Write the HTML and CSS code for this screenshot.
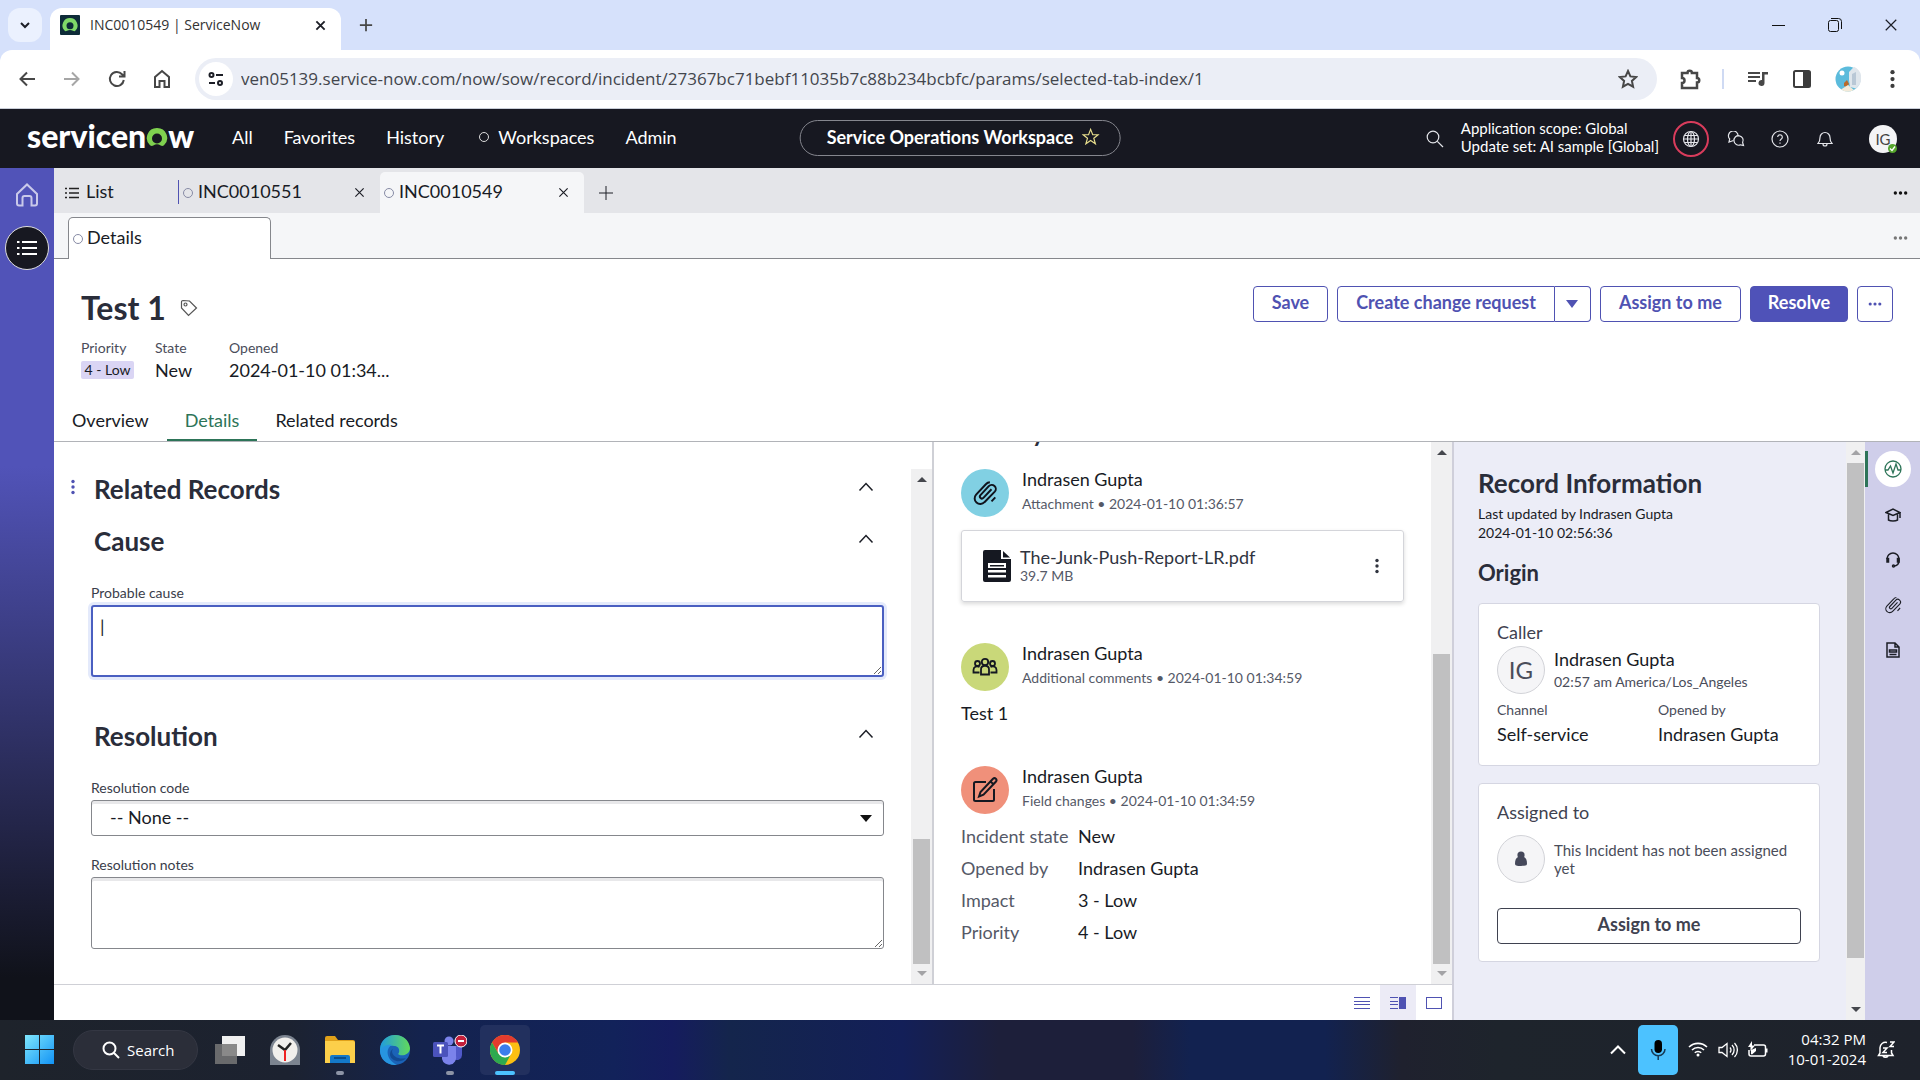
FILE: index.html
```html
<!DOCTYPE html>
<html lang="en">
<head>
<meta charset="utf-8">
<title>INC0010549 | ServiceNow</title>
<link rel="stylesheet" href="styles.css">
</head>
<body>
<svg class="defs" aria-hidden="true">
  <symbol id="clip" viewBox="0 0 24 24"><path d="M18 8.500 10.500 16.500a1.800 1.800 0 0 1-2.700-2.500l7.700-8.300a3.700 3.700 0 0 1 5.500 5L11.500 20.500a5.200 5.200 0 0 1-7.700-7L13 3.700a5 5 0 0 1 3.500-1.700M21.500 16l-3.500 3.700"/></symbol>
  <symbol id="chev" viewBox="0 0 16 16"><path d="m1.500 11.500 6.500-7 6.500 7"/></symbol>
  <symbol id="cross" viewBox="0 0 12 12"><path d="m1.500 1.500 9 9m0-9-9 9"/></symbol>
  <symbol id="plus" viewBox="0 0 16 16"><path d="M8 1v14M1 8h14"/></symbol>
  <symbol id="dots" viewBox="0 0 16 4"><circle cx="2.500" cy="2" r="1.800"/><circle cx="8" cy="2" r="1.800"/><circle cx="13.500" cy="2" r="1.800"/></symbol>
  <symbol id="kebab" viewBox="0 0 4 16"><circle cx="2" cy="2.500" r="1.700"/><circle cx="2" cy="8" r="1.700"/><circle cx="2" cy="13.500" r="1.700"/></symbol>
</svg>

<header class="browser">
  <div class="strip">
    <button class="strip-menu" aria-label="Search tabs"><svg width="12" height="12" viewBox="0 0 12 12"><path d="m2 4 4 4 4-4"/></svg></button>
    <div class="browser-tab">
      <svg class="favicon" width="20" height="20" viewBox="0 0 20 20"><rect width="20" height="20" rx="1" fill="#0d2b38"/><path d="M10 3a7.500 7.500 0 0 0-5.500 12.600c.7.800 1.600.7 2.500.1 1.800-1.100 4.200-1.100 6 0 .9.600 1.800.7 2.500-.1A7.500 7.500 0 0 0 10 3Z" fill="#7fd968"/><circle cx="10" cy="10.800" r="3.500" fill="#0d2b38"/></svg>
      <span class="browser-tab-title">INC0010549 | ServiceNow</span>
      <button class="icon-btn" aria-label="Close tab"><svg class="ln w2" width="11" height="11"><use href="#cross"/></svg></button>
    </div>
    <button class="icon-btn new-tab" aria-label="New tab"><svg class="ln w2 grey" width="14" height="14"><use href="#plus"/></svg></button>
    <div class="win-controls">
      <button class="icon-btn" aria-label="Minimize"><svg width="14" height="14"><path d="M0 7.500h13" stroke="#111"/></svg></button>
      <button class="icon-btn" aria-label="Restore"><svg width="14" height="14" fill="none" stroke="#111"><rect x=".5" y="2.500" width="10" height="11" rx="2"/><path d="M3 .5h7.500a3 3 0 0 1 3 3V11"/></svg></button>
      <button class="icon-btn" aria-label="Close"><svg class="ln" width="14" height="14"><use href="#cross"/></svg></button>
    </div>
  </div>
  <div class="toolbar">
    <div class="nav-btns">
      <button class="icon-btn" aria-label="Back"><svg class="ln w2 grey" width="16" height="16" viewBox="0 0 16 16"><path d="M16 8H2M8 1.500 1.500 8 8 14.500"/></svg></button>
      <button class="icon-btn" aria-label="Forward"><svg class="ln w2 pale" width="16" height="16" viewBox="0 0 16 16"><path d="M0 8h14M8 1.500 14.500 8 8 14.500"/></svg></button>
      <button class="icon-btn" aria-label="Reload"><svg class="ln w2 grey" width="18" height="18" viewBox="0 0 18 18"><path d="M15.800 10A7 7 0 1 1 14 4.200L16 6M16.500 1v5.500H11"/></svg></button>
      <button class="icon-btn" aria-label="Home"><svg class="ln w2 grey" width="18" height="20" viewBox="0 0 18 20"><path d="M2 8 9 2l7 6v10h-4.500v-6h-5v6H2Z"/></svg></button>
    </div>
    <div class="urlbar">
      <button class="site-info" aria-label="Site information"><svg class="ln w2" width="16" height="14" viewBox="0 0 16 14"><circle cx="3.500" cy="3" r="2"/><path d="M8 3h7M1 11h6"/><circle cx="12" cy="11" r="2"/></svg></button>
      <input class="url" aria-label="Address" value="ven05139.service-now.com/now/sow/record/incident/27367bc71bebf11035b7c88b234bcbfc/params/selected-tab-index/1">
      <button class="icon-btn" aria-label="Bookmark"><svg class="ln w2 grey" width="20" height="20" viewBox="0 0 20 20"><path d="m10 2 2.400 5.400 5.800.6-4.300 3.900 1.200 5.800L10 14.800l-5.100 2.900 1.200-5.800L1.800 8l5.800-.6Z"/></svg></button>
    </div>
    <div class="ext-btns">
      <button class="icon-btn" aria-label="Extensions"><svg class="ln w25 grey" width="22" height="22" viewBox="0 0 22 22"><path d="M2 5h5.500a2.200 2.200 0 0 1 4.400 0H17v5a2.200 2.200 0 0 1 0 4.500V20H2v-5a2.500 2.500 0 0 0 0-5Z"/></svg></button>
      <span class="vbar"></span>
      <button class="icon-btn" aria-label="Media"><svg width="20" height="16" viewBox="0 0 20 16" fill="#474747"><path d="M0 1h12v2H0zM0 5h12v2H0zM0 9h8v2H0zM14 1h6v2.500h-3.500V12a3 3 0 1 1-2.500-3Z"/></svg></button>
      <button class="icon-btn" aria-label="Side panel"><svg width="18" height="18" viewBox="0 0 18 18"><rect x="1" y="1" width="16" height="16" rx="1.500" fill="none" stroke="#3c3c3c" stroke-width="2"/><path d="M10 1h7v16h-7z" fill="#3c3c3c"/></svg></button>
      <button class="icon-btn profile" aria-label="Profile"><svg width="26" height="26" viewBox="0 0 26 26"><circle cx="13" cy="13" r="12.500" fill="#5bbbdc"/><path d="m14 6 5-5.200a12.500 12.500 0 0 1 2 21.600L15 21l-1-7Z" fill="#dfe6ec"/><path d="m17 8 4-2v13h-4Z" fill="#b9c8d6"/><circle cx="7" cy="7" r="2.500" fill="#fff"/><path d="m9 17 3-3 2 4-2 3-3-1Z" fill="#b86a2a"/><path d="M6 23.500 13 19l6 5a12.500 12.500 0 0 1-13-.5Z" fill="#f2ead9"/></svg></button>
      <button class="icon-btn" aria-label="Menu"><svg width="5" height="20" fill="#3c3c3c"><use href="#kebab"/></svg></button>
    </div>
  </div>
</header>

<nav class="sn-header">
  <a class="logo" href="#" aria-label="servicenow"><span>servicen</span><svg width="22" height="22" viewBox="0 0 22 22"><path d="M11 1A10 10 0 0 0 4 18.300c1 .9 2.300 1 3.300.3a6.200 6.200 0 0 1 7.400 0c1 .7 2.300.6 3.300-.3A10 10 0 0 0 11 1Z" fill="#7fd14f"/><circle cx="11" cy="11.500" r="5" fill="#171821"/></svg><span>w</span></a>
  <div class="menu">
    <a href="#">All</a><a href="#">Favorites</a><a href="#">History</a><a href="#" class="spaces"><i class="ring"></i>Workspaces</a><a href="#">Admin</a>
  </div>
  <button class="workspace">Service Operations Workspace<svg width="18" height="18" viewBox="0 0 20 20" fill="none" stroke="#e6dc8c" stroke-width="1.300"><path d="m10 1.500 2.300 6h6l-4.800 3.800 1.800 6.200-5.300-3.600-5.300 3.600 1.800-6.200L1.700 7.500h6Z"/></svg></button>
  <div class="tools">
    <button class="icon-btn" aria-label="Search"><svg class="lt" width="18" height="18" viewBox="0 0 18 18"><circle cx="7" cy="7" r="5.800"/><path d="m11.300 11.300 5.700 5.700"/></svg></button>
    <p class="scope">Application scope: Global<br>Update set: AI sample [Global]</p>
    <button class="icon-btn globe" aria-label="Scope"><svg class="lt" width="18" height="18" viewBox="0 0 18 18"><circle cx="9" cy="9" r="7.500"/><ellipse cx="9" cy="9" rx="3.500" ry="7.500"/><path d="M9 1.500v15M1.500 9h15M2.500 5.500h13M2.500 12.500h13"/></svg></button>
    <button class="icon-btn" aria-label="Chat"><svg class="lt" width="18" height="16" viewBox="0 0 18 16"><path d="M6.500 9.500 2 11l.7-3A4.800 4.800 0 1 1 11 5.500"/><path d="M7 10a4.600 4.600 0 1 1 8.600 1.500l.9 3-3-.7A4.600 4.600 0 0 1 7 10Z"/></svg></button>
    <button class="icon-btn" aria-label="Help"><svg class="lt" width="18" height="18" viewBox="0 0 18 18"><circle cx="9" cy="9" r="8"/><path d="M6.700 7a2.300 2.300 0 1 1 3.600 2c-.9.600-1.300 1-1.300 2M9 12.500v1.300"/></svg></button>
    <button class="icon-btn" aria-label="Notifications"><svg class="lt" width="16" height="18" viewBox="0 0 16 18"><path d="M1 13.500c1.500-1.500 2-3 2-6a5 5 0 0 1 10 0c0 3 .5 4.500 2 6ZM6 14a2 2 0 0 0 4 0"/></svg></button>
    <button class="user" aria-label="User menu">IG<i class="online"><svg width="9" height="9" viewBox="0 0 9 9"><path d="m2 4.500 2 2 3-4" fill="none" stroke="#fff" stroke-width="1.300"/></svg></i></button>
  </div>
</nav>

<div class="app">
  <aside class="rail">
    <button class="icon-btn" aria-label="Home"><svg width="24" height="24" viewBox="0 0 24 24" fill="none" stroke="#c9c9ea" stroke-width="2"><path d="M2 11 12 1.500 22 11v9.500a2 2 0 0 1-2 2h-3.500V15a2 2 0 0 0-2-2h-5a2 2 0 0 0-2 2v7.500H4a2 2 0 0 1-2-2Z"/></svg></button>
    <button class="rail-active" aria-label="Lists"><svg width="20" height="16" viewBox="0 0 20 16" stroke="#fff" stroke-width="2"><path d="M0 2h2.500M5 2h15M0 8h2.500M5 8h15M0 14h2.500M5 14h15"/></svg></button>
  </aside>
  <main class="main">
    <div class="tabs">
      <button class="tab list"><svg width="14" height="12" viewBox="0 0 14 12" stroke="#222" stroke-width="1.300"><path d="M0 1.500h2M4 1.500h10M0 6h2M4 6h10M0 10.500h2M4 10.500h10"/></svg><span>List</span></button>
      <div class="tab wide"><i class="ring"></i><span>INC0010551</span><button class="icon-btn" aria-label="Close INC0010551"><svg class="ln w13" width="11" height="11"><use href="#cross"/></svg></button></div>
      <div class="tab wide on"><i class="ring"></i><span>INC0010549</span><button class="icon-btn" aria-label="Close INC0010549"><svg class="ln w13" width="11" height="11"><use href="#cross"/></svg></button></div>
      <button class="icon-btn add" aria-label="Add tab"><svg class="ln" width="16" height="16"><use href="#plus"/></svg></button>
      <button class="icon-btn more" aria-label="More tabs"><svg width="15" height="4" fill="#111"><use href="#dots"/></svg></button>
    </div>
    <div class="subtabs">
      <button class="subtab"><i class="ring"></i><span>Details</span></button>
      <div class="subfill"><button class="icon-btn more" aria-label="More"><svg width="15" height="4" fill="#777"><use href="#dots"/></svg></button></div>
    </div>
    <section class="record">
      <div class="record-top">
        <div class="title"><h1>Test 1</h1><svg width="18" height="18" viewBox="0 0 18 18" fill="none" stroke="#555" stroke-width="1.200"><path d="M1.500 3v6l7 7.500 8-7.500-7-7-6.500-.5a1.500 1.500 0 0 0-1.500 1.500Z"/><circle cx="5.500" cy="5.500" r="1.500"/></svg></div>
        <div class="actions">
          <button class="btn">Save</button>
          <div class="split"><button class="btn">Create change request</button><button class="btn sq" aria-label="More change actions"><svg width="12" height="8"><path d="M0 0h12L6 8Z" fill="#4f52b2"/></svg></button></div>
          <button class="btn">Assign to me</button>
          <button class="btn primary">Resolve</button>
          <button class="btn sq" aria-label="More actions"><svg width="14" height="4" fill="#4f52b2"><use href="#dots"/></svg></button>
        </div>
      </div>
      <dl class="facts">
        <div><dt>Priority</dt><dd><span class="badge">4 - Low</span></dd></div>
        <div><dt>State</dt><dd>New</dd></div>
        <div class="opened"><dt>Opened</dt><dd>2024-01-10 01:34...</dd></div>
      </dl>
      <div class="rec-tabs"><a href="#">Overview</a><a href="#" class="on">Details</a><a href="#">Related records</a></div>
    </section>

    <div class="panes">
      <div class="work">
        <div class="columns">
          <form class="form">
            <div class="fields">
              <div class="sec-head first"><svg class="grip" width="4" height="16" fill="#4f52b2"><use href="#kebab"/></svg><h2>Related Records</h2><button type="button" class="icon-btn" aria-label="Collapse Related Records"><svg class="ln w15" width="16" height="16"><use href="#chev"/></svg></button></div>
              <div class="sec-head"><h2>Cause</h2><button type="button" class="icon-btn" aria-label="Collapse Cause"><svg class="ln w15" width="16" height="16"><use href="#chev"/></svg></button></div>
              <div class="sec-body">
                <div class="field"><label for="cause">Probable cause</label><div class="area"><textarea id="cause" class="focus">|</textarea></div></div>
              </div>
              <div class="sec-head"><h2>Resolution</h2><button type="button" class="icon-btn" aria-label="Collapse Resolution"><svg class="ln w15" width="16" height="16"><use href="#chev"/></svg></button></div>
              <div class="sec-body">
                <div class="field choice"><label for="code">Resolution code</label><select id="code"><option>-- None --</option></select></div>
                <div class="field"><label for="notes">Resolution notes</label><div class="area"><textarea id="notes"></textarea></div></div>
              </div>
            </div>
            <div class="scroll form-scroll"><i class="up"></i><b></b><i class="down off"></i></div>
          </form>
          <div class="timeline">
            <div class="feed">
              <h2 class="feed-title">Activity</h2>
              <article class="entry">
                <div class="who"><span class="dot blue"><svg width="26" height="26" fill="none" stroke="#10131c" stroke-width="1.800"><use href="#clip"/></svg></span><div><h3>Indrasen Gupta</h3><p>Attachment • 2024-01-10 01:36:57</p></div></div>
                <div class="file"><svg width="28" height="32" viewBox="0 0 28 32"><path d="M2 0h16v9h10v21a2 2 0 0 1-2 2H2a2 2 0 0 1-2-2V2a2 2 0 0 1 2-2Z" fill="#151821"/><path d="m20 1 7 6.500h-7Z" fill="#151821"/><path d="M5 13h18v5H5zM5 20h18v2.500H5zM5 25h18v2.500H5z" fill="#fff"/><path d="M7 15h14v1.500H7z" fill="#151821"/></svg><div><strong>The-Junk-Push-Report-LR.pdf</strong><small>39.7 MB</small></div><button class="icon-btn" aria-label="File actions"><svg width="4" height="16" fill="#30343f"><use href="#kebab"/></svg></button></div>
              </article>
              <article class="entry second">
                <div class="who"><span class="dot green"><svg width="26" height="20" viewBox="0 0 26 20" fill="none" stroke="#151821" stroke-width="1.800"><circle cx="5.500" cy="6.500" r="2.500"/><circle cx="20.500" cy="6.500" r="2.500"/><circle cx="13" cy="5" r="3.200"/><path d="M9 17.500v-5c0-5 8-5 8 0v5ZM7.500 15.500H1.500V13c0-3 3-4.500 6-3M18.500 15.500h6V13c0-3-3-4.500-6-3"/></svg></span><div><h3>Indrasen Gupta</h3><p>Additional comments • 2024-01-10 01:34:59</p></div></div>
                <p class="comment">Test 1</p>
              </article>
              <article class="entry third">
                <div class="who"><span class="dot coral"><svg width="26" height="26" viewBox="0 0 26 26" fill="none" stroke="#151821" stroke-width="2"><path d="M14 5H3.500A1.500 1.500 0 0 0 2 6.500v16A1.500 1.500 0 0 0 3.500 24h17a1.500 1.500 0 0 0 1.500-1.500V12"/><path d="M7 19.500 8.500 15 21 1.800c2-1.800 4.500.7 3 2.700L11.500 17.700ZM18.500 4.500l3 2.700"/></svg></span><div><h3>Indrasen Gupta</h3><p>Field changes • 2024-01-10 01:34:59</p></div></div>
                <table class="changes"><tbody>
                  <tr><th scope="row">Incident state</th><td>New</td></tr>
                  <tr><th scope="row">Opened by</th><td>Indrasen Gupta</td></tr>
                  <tr><th scope="row">Impact</th><td>3 - Low</td></tr>
                  <tr><th scope="row">Priority</th><td>4 - Low</td></tr>
                </tbody></table>
              </article>
            </div>
            <div class="scroll feed-scroll"><i class="up"></i><b></b><i class="down off"></i></div>
          </div>
        </div>
        <div class="layout-bar">
          <button class="icon-btn" aria-label="Single column"><svg width="16" height="12" stroke="#4f52b2"><path d="M0 .5h16M0 4.500h16M0 7.500h16M0 11.500h16"/></svg></button>
          <button class="icon-btn on" aria-label="Two columns"><svg width="16" height="12" stroke="#4f52b2"><path d="M0 .5h8M0 4.500h8M0 7.500h8M0 11.500h8"/><path d="M9 0h7v12H9z" fill="#4f52b2" stroke="none"/></svg></button>
          <button class="icon-btn" aria-label="Full width"><svg width="16" height="12"><rect x=".5" y=".5" width="15" height="11" fill="none" stroke="#4f52b2"/></svg></button>
        </div>
      </div>
      <aside class="info">
        <div class="info-body">
          <h2>Record Information</h2>
          <p class="updated">Last updated by Indrasen Gupta<br>2024-01-10 02:56:36</p>
          <h3>Origin</h3>
          <section class="card">
            <h4>Caller</h4>
            <div class="person"><span class="face">IG</span><div><strong>Indrasen Gupta</strong><small>02:57 am America/Los_Angeles</small></div></div>
            <dl class="pair"><div><dt>Channel</dt><dd>Self-service</dd></div><div><dt>Opened by</dt><dd>Indrasen Gupta</dd></div></dl>
          </section>
          <section class="card assigned">
            <h4>Assigned to</h4>
            <div class="person"><span class="face"><svg width="12" height="16" fill="#45485a"><circle cx="6" cy="4" r="3.600"/><path d="M3 6h6c2 1 3 3 3 6.500 0 2-1.500 2.500-6 2.500S0 14.500 0 12.500C0 9 1 7 3 6Z"/></svg></span><p>This Incident has not been assigned yet</p></div>
            <button class="btn plain">Assign to me</button>
          </section>
        </div>
        <div class="scroll info-scroll"><i class="up off"></i><b></b><i class="down"></i></div>
      </aside>
      <nav class="side">
        <div class="side-on"><button class="icon-btn" aria-label="Record information"><svg width="18" height="18" viewBox="0 0 18 18" fill="none" stroke="#2d7458" stroke-width="1.300"><circle cx="9" cy="9" r="8"/><path d="M1 10h3l2.500-4 2.500 7 3-9 2 6h3"/></svg></button></div>
        <button class="icon-btn" aria-label="Knowledge"><svg class="ln w15" width="16" height="14" viewBox="0 0 16 14"><path d="M1 4.500 8 1l7 3.500L8 7.500Zm2.500 2V12c2 1.300 7 1.300 9 0V6.500M15 4.500V10"/></svg></button>
        <button class="icon-btn" aria-label="Assist"><svg class="ln w15" width="16" height="16" viewBox="0 0 16 16"><path d="M2 7a6 6 0 0 1 12 0v1.500c0 3-1.500 5-4.500 5.500"/><path d="M2 6.500v3.500h1.500V6.500ZM14 6.500v3.500h-1.500V6.500Z"/><circle cx="8.500" cy="14" r="1"/></svg></button>
        <button class="icon-btn" aria-label="Attachments"><svg class="ln w15" width="18" height="18"><use href="#clip"/></svg></button>
        <button class="icon-btn" aria-label="Templates"><svg class="ln w15" width="14" height="16" viewBox="0 0 14 16"><path d="M1 1h8l4 4v10H1ZM9 1v4h4M3.500 8h7v2h-7ZM3.500 12.500h7"/></svg></button>
      </nav>
    </div>
  </main>
</div>

<footer class="taskbar">
  <div class="apps">
    <button class="app-ic" aria-label="Start"><svg width="30" height="30" viewBox="0 0 30 30"><defs><linearGradient id="w" x2="1" y2="1"><stop stop-color="#7fe7fd"/><stop offset="1" stop-color="#1293f5"/></linearGradient></defs><path d="M0 0h14v14H0zM15 0h14v14H15zM0 15h14v14H0zM15 15h14v14H15z" fill="url(#w)"/></svg></button>
    <button class="search"><svg width="18" height="18" viewBox="0 0 18 18" fill="none" stroke="#fff" stroke-width="2"><circle cx="7.500" cy="7.500" r="6"/><path d="m12 12 5 5"/></svg>Search</button>
    <button class="app-ic" aria-label="Task view"><svg width="30" height="30"><path d="M7 1h23v20H7z" fill="#f0f0f0"/><path d="M0 9h22v20H0z" fill="#777" opacity=".85"/></svg></button>
    <button class="app-ic" aria-label="Clock"><svg width="30" height="30"><path d="M0 30V15a15 15 0 0 1 30 0v15Z" fill="#7c8490"/><circle cx="15" cy="15" r="12.500" fill="#f1efec"/><path d="M8 10l7 5 6-7" fill="none" stroke="#222" stroke-width="2.500"/><path d="M15 15v11" stroke="#e22" stroke-width="2"/></svg></button>
    <button class="app-ic run" aria-label="File Explorer"><svg width="30" height="30"><path d="M0 3a2 2 0 0 1 2-2h8l3 4h15a2 2 0 0 1 2 2v20H0Z" fill="#e0a11a"/><path d="M0 6h28a2 2 0 0 1 2 2v20H0Z" fill="#fccf4a"/><path d="M5 28v-6a2 2 0 0 1 2-2h16a2 2 0 0 1 2 2v6Z" fill="#1479c9"/><path d="M9 23h12" stroke="#0a4f8f" stroke-width="2"/></svg></button>
    <button class="app-ic" aria-label="Edge"><svg width="30" height="30" viewBox="0 0 30 30"><defs><linearGradient id="e" x2="1"><stop stop-color="#1f9be0"/><stop offset="1" stop-color="#62d95a"/></linearGradient></defs><circle cx="15" cy="15" r="15" fill="#1b63b7"/><path d="M0 14C1-4 28-5 30 13c0 7-9 9-12 6 2-2 2-8-4-8C7 10 2 14 0 18Z" fill="url(#e)"/><path d="M0 16c2-5 8-7 12-6-7 3-6 15 5 19.800C7 31 0 24 0 16Z" fill="#2795e0"/><path d="M12 16c0 6 8 9 14 7-5 6-15 3-16-3 0-3 1-5 3-6Z" fill="#124a93"/></svg></button>
    <button class="app-ic run" aria-label="Teams"><svg width="34" height="30" viewBox="0 0 34 30"><circle cx="16" cy="6" r="4.500" fill="#7b83eb"/><path d="M18 11h11v9a5 5 0 0 1-8 4Z" fill="#5059c9"/><path d="M9 11h14v10a7 7 0 0 1-14 3Z" fill="#7b83eb"/><rect y="7" width="15" height="15" rx="1.500" fill="#4b53bc"/><path d="M4 10.500h7M7.500 10.500v8" stroke="#fff" stroke-width="2"/><circle cx="28" cy="6" r="6" fill="#c4203b" stroke="#fff"/><path d="M25 6h6" stroke="#fff" stroke-width="2"/></svg></button>
    <button class="app-ic run active" aria-label="Chrome"><svg width="30" height="30" viewBox="0 0 30 30"><circle cx="15" cy="15" r="15" fill="#fbbf12"/><path d="M2 7.500A15 15 0 0 1 28 7.500H15L8.500 18.700Z" fill="#e33b2e"/><path d="M2 7.500 8.500 18.700 15 22.500 20.500 20 15 30A15 15 0 0 1 2 7.500Z" fill="#2da94f"/><circle cx="15" cy="15" r="7.500" fill="#fff"/><circle cx="15" cy="15" r="5.800" fill="#3b7ded"/></svg></button>
  </div>
  <div class="tray">
    <button class="icon-btn" aria-label="Hidden icons"><svg width="16" height="10" fill="none" stroke="#fff" stroke-width="2"><path d="m1 8.500 7-7 7 7"/></svg></button>
    <button class="mic" aria-label="Microphone"><svg width="16" height="22" viewBox="0 0 16 22"><rect x="4.500" y="1" width="7.500" height="13" rx="3.700" fill="#000"/><path d="M1.500 10a6.700 6.700 0 0 0 13.500 0M8.200 17v4" fill="none" stroke="#173a55" stroke-width="1.500"/></svg></button>
    <div class="status">
      <svg width="20" height="16" viewBox="0 0 20 16" fill="none" stroke="#fff" stroke-width="1.600"><path d="M1 6a13 13 0 0 1 18 0M4 9a8.500 8.500 0 0 1 12 0M6.800 11.800a4.500 4.500 0 0 1 6.400 0"/><circle cx="10" cy="14" r="1.500" fill="#fff" stroke="none"/></svg>
      <svg width="20" height="18" viewBox="0 0 20 18" fill="none" stroke="#fff" stroke-width="1.300"><path d="M1 6.500h3l5-4v13l-5-4H1ZM12 6.500a4 4 0 0 1 0 5M14 4a7 7 0 0 1 0 10M16.500 2a10 10 0 0 1 0 14"/></svg>
      <svg width="20" height="18" viewBox="0 0 20 18" fill="none" stroke="#fff" stroke-width="1.500"><path d="M6 4h9.500A2 2 0 0 1 17.500 6v7a2 2 0 0 1-2 2H3a2 2 0 0 1-2-2V9"/><path d="M18 7.500h1.500v4H18ZM3 13V9l5-2v3l-4 3.500Z" fill="#fff" stroke="none"/><path d="M4 0 0 6h2.500v4L7 4.500H4Z" fill="#fff" stroke="none"/></svg>
    </div>
    <p class="clock">04:32 PM<br>10-01-2024</p>
    <button class="icon-btn" aria-label="Do not disturb"><svg width="18" height="18" viewBox="0 0 18 18" fill="none" stroke="#fff" stroke-width="1.500"><path d="M10 1.500a5.500 5.500 0 0 0-7 5.500v5l-1.500 2.500h14.500L14.500 12V9M6 15a3 3 0 0 0 5 0M6 7h4l-4 4.500h4M13 1h4l-4 4.500h4"/></svg></button>
  </div>
</footer>
</body>
</html>
```
FILE: styles.css
```css
* { box-sizing: border-box; }
html, body { height: 100%; }
body { margin: 0; display: flex; flex-direction: column; min-height: 100vh; font: 18px/24px Lato, "Noto Sans", sans-serif; color: #181b25; background: #fff; overflow: hidden; }
h1, h2, h3, h4, p, dl, dd { margin: 0; }
a { color: inherit; text-decoration: none; }
button, input, select, textarea { font: inherit; color: inherit; }
svg { display: block; flex: none; }
.defs { position: absolute; width: 0; height: 0; }
.icon-btn { display: flex; align-items: center; justify-content: center; padding: 0; border: 0; background: none; flex: none; }
.ln { fill: none; stroke: #1c1e26; stroke-width: 1; }
.w13 { stroke-width: 1.3; } .w15 { stroke-width: 1.5; } .w2 { stroke-width: 2; } .w25 { stroke-width: 2.5; }
.grey { stroke: #474747; } .pale { stroke: #a6a6a6; }
.ring { flex: none; width: 10px; height: 10px; border: 1px solid #878ba5; border-radius: 50%; }

/* browser chrome */
.browser { flex: none; font-family: "Open Sans", sans-serif; background: #d6e1fb; }
.strip { display: flex; height: 50px; padding-left: 8px; }
.strip-menu { width: 34px; height: 34px; margin: 8px 8px 0 0; display: flex; align-items: center; justify-content: center; padding: 0; border: 0; border-radius: 12px; background: #ebf1fe; }
.strip-menu svg { fill: none; stroke: #1c1e26; stroke-width: 2; }
.browser-tab { display: flex; align-items: center; width: 291px; height: 42px; margin-top: 8px; padding: 0 15px 8px 10px; border-radius: 12px 12px 0 0; background: #fff; }
.browser-tab-title { flex: 1; margin-left: 10px; font-size: 14px; color: #333; }
.new-tab { width: 50px; }
.win-controls { display: flex; gap: 42px; margin-left: auto; padding-right: 22px; }
.toolbar { display: flex; align-items: center; height: 59px; padding-right: 25px; background: #fff; border-bottom: 1px solid #c9ced8; border-radius: 12px 12px 0 0; }
.nav-btns { display: flex; width: 195px; padding-left: 4px; }
.nav-btns .icon-btn { width: 45px; height: 32px; }
.urlbar { flex: 1; display: flex; align-items: center; height: 42px; padding: 0 19px 0 4px; border-radius: 21px; background: #ebeef6; }
.site-info { display: flex; align-items: center; justify-content: center; width: 34px; height: 34px; padding: 0; border: 0; border-radius: 50%; background: #fff; }
.url { flex: 1; padding: 0 8px; border: 0; background: none; font-size: 17px; color: #43464d; }
.ext-btns { display: flex; align-items: center; padding-left: 23px; }
.ext-btns .icon-btn { width: 22px; }
.ext-btns .icon-btn + .icon-btn { margin-left: 22px; }
.ext-btns .icon-btn.profile { margin-left: 24px; }
.ext-btns .icon-btn:last-child { width: 5px; margin-left: 31px; }
.vbar { width: 2px; height: 20px; margin: 0 23px 0 20px; background: #cfdaf3; }

/* product header */
.sn-header { flex: none; position: relative; display: flex; align-items: center; height: 59px; padding: 0 23px 0 27px; color: #fff; background: #171821; }
.logo { display: flex; align-items: center; width: 205px; padding-bottom: 5px; font-size: 32px; font-weight: 900; line-height: 40px; }
.logo svg { margin-top: 4px; }
.menu { display: flex; gap: 31px; padding-bottom: 3px; }
.menu a { display: flex; align-items: center; gap: 9px; }
.menu .spaces { padding-left: 4px; }
.menu .ring { border-color: #ddd; }
.workspace { position: absolute; left: 50%; top: 11px; transform: translateX(-50%); display: flex; align-items: center; gap: 8px; height: 36px; padding: 0 20px 2px 26px; border: 1px solid #85868e; border-radius: 18px; background: none; font-weight: 700; white-space: nowrap; }
.tools { display: flex; align-items: center; margin-left: auto; }
.lt { fill: none; stroke: #e4e5ea; stroke-width: 1.2; }
.scope { margin: 0 14px 0 17px; padding-bottom: 3px; font-size: 15px; line-height: 18px; white-space: nowrap; }
.tools .globe { width: 36px; height: 36px; margin-right: 18px; border: 2px solid #d93c5c; border-radius: 50%; }
.globe + .icon-btn { margin-right: 26px; }
.globe + .icon-btn + .icon-btn { margin-right: 28px; }
.user { position: relative; width: 28px; height: 28px; margin-left: 36px; padding: 0; border: 0; border-radius: 50%; font-size: 15px; color: #444; background: #f4f4f6; }
.online { position: absolute; right: 0; bottom: 0; width: 9px; height: 9px; border-radius: 50%; background: #55a52c; }

/* shell */
.app { flex: 1; display: flex; min-height: 0; }
.rail { flex: none; width: 54px; display: flex; flex-direction: column; align-items: center; padding-top: 15px; background: linear-gradient(#5153b8 0, #5153b8 35%, #10121a 95%); }
.rail-active { display: flex; align-items: center; justify-content: center; width: 44px; height: 44px; margin-top: 19px; padding: 0; border: 1px solid #ddd; border-radius: 50%; background: #171821; }
.main { flex: 1; display: flex; flex-direction: column; min-width: 0; }
.tabs { flex: none; display: flex; height: 45px; padding: 4px 12px 0 0; background: #e4e5e9; }
.tab { display: flex; align-items: center; border: 0; padding: 0 15px 0 4px; background: none; }
.tab span, .subtab span { padding-bottom: 3px; }
.tab.list { position: relative; width: 125px; gap: 7px; padding-left: 11px; border-right: 0; }
.tab.list::after { content: ""; position: absolute; right: 0; top: 8px; height: 24px; border-right: 1px solid #4f52b2; }
.tab.wide { width: 204px; gap: 5px; }
.tab.wide:nth-child(2) { width: 201px; }
.tab.wide span { flex: 1; }
.tab.on { border-radius: 5px 5px 0 0; background: #f5f6f8; }
.add { width: 43px; }
.more { margin-left: auto; }
.subtabs { flex: none; display: flex; height: 46px; padding-top: 4px; background: #f5f6f8; }
.subtabs::before { content: ""; width: 14px; border-bottom: 1px solid #85878c; }
.subtab { display: flex; align-items: center; gap: 4px; width: 203px; padding: 0 4px; border: 1px solid #85878c; border-bottom: 0; border-radius: 5px 5px 0 0; background: #fff; }
.subfill { flex: 1; display: flex; padding-right: 12px; border-bottom: 1px solid #85878c; }

/* record header */
.record { flex: none; border-bottom: 1px solid #b1b3b8; }
.record-top { display: flex; justify-content: space-between; padding: 27px 27px 0; }
.title { display: flex; align-items: center; gap: 14px; height: 44px; }
h1 { font-size: 32px; line-height: 44px; color: #2a2d3a; }
.actions { display: flex; gap: 9px; }
.btn { display: flex; align-items: center; justify-content: center; height: 36px; padding: 0 18px 4px; border: 1px solid #4f52b2; border-radius: 4px; background: #fff; color: #4f52b2; font-weight: 700; white-space: nowrap; }
.btn.sq { width: 36px; padding: 0; }
.btn.primary { padding: 0 17px 4px; background: #4f52b8; color: #fff; }
.split { display: flex; }
.split .btn:first-child { border-radius: 4px 0 0 4px; }
.split .btn:last-child { border-left: 0; border-radius: 0 4px 4px 0; }
.facts { display: flex; padding: 9px 0 0 27px; }
.facts > div { width: 74px; white-space: nowrap; }
dt { font-size: 14px; line-height: 18px; color: #4a4d5a; }
.facts dd { height: 26px; line-height: 26px; }
.badge { display: block; width: 53px; height: 18px; margin-top: 4px; border-radius: 2px; background: #dad5f4; font-size: 14px; line-height: 18px; text-align: center; }
.rec-tabs { display: flex; height: 54px; }
.rec-tabs a { display: flex; align-items: center; padding: 14px 18px 0; border-bottom: 2px solid transparent; }
.rec-tabs .on { border-bottom-color: #2d7458; color: #2d7458; }

/* panes */
.panes { flex: 1; display: flex; min-height: 0; }
.work { flex: 1; display: flex; flex-direction: column; min-width: 0; border-right: 2px solid #cfcfda; }
.columns { flex: 1; display: flex; min-height: 0; }
.form { flex: 1; display: flex; min-width: 0; padding-top: 21px; border-right: 2px solid #cfd0d6; }
.fields { flex: 1; padding: 0 27px 0 37px; min-width: 0; }
.sec-head { position: relative; display: flex; align-items: center; justify-content: space-between; height: 52px; padding: 0 10px 0 3px; }
.grip { position: absolute; left: -20px; top: 16px; }
.sec-head .icon-btn { margin-bottom: 4px; }
h2 { font-size: 26px; line-height: 36px; color: #2a2d3a; }
.sec-body { padding: 18px 0 33px; }
.field + .field { margin-top: 21px; }
.field label { display: block; margin-bottom: 4px; font-size: 14px; line-height: 16px; color: #3a3d4a; }
textarea { display: block; width: 100%; height: 72px; padding: 7px; border: 1px solid #85878c; border-radius: 3px; background: #fff; box-shadow: inset 0 3px 0 #e8e8ea; resize: vertical; outline: 0; }
textarea.focus { border: 2px solid #4a5fc1; box-shadow: 0 0 0 3px #e4eafb; }
select { appearance: none; display: block; width: 100%; height: 36px; padding: 0 18px 2px; border: 1px solid #85878c; border-radius: 3px; background: #fff; box-shadow: inset 0 3px 0 #e8e8ea; }
.choice { position: relative; }
.choice::after { content: ""; position: absolute; right: 12px; bottom: 14px; border: 6px solid transparent; border-top: 7px solid #111; border-bottom: 0; pointer-events: none; }
.scroll { flex: none; display: flex; flex-direction: column; align-items: center; width: 21px; padding: 8px 0; background: #f0f0f1; }
.scroll i { border: 5px solid transparent; }
.scroll b { width: 17px; background: #c0c0c1; }
.scroll .up { border-top: 0; border-bottom: 5px solid #45474d; }
.scroll .down { border-bottom: 0; border-top: 5px solid #45474d; margin-top: auto; }
.scroll .up.off { border-bottom-color: #a3a3a6; }
.scroll .down.off { border-top-color: #a3a3a6; }
.form-scroll { margin-top: 6px; }
.form-scroll b { height: 25%; margin-top: auto; margin-bottom: 7px; }
.form-scroll .down, .feed-scroll .down { margin-top: 0; }
.feed-scroll b { height: 59%; margin-top: auto; margin-bottom: 7px; }
.info-scroll { width: 19px; }
.info-scroll b { height: 88%; margin-top: 8px; }
.timeline { flex: none; display: flex; width: 518px; }
.feed { flex: 1; padding: 0 27px; overflow: hidden; }
.feed-title { height: 27px; display: flex; align-items: flex-end; font-size: 24px; padding-bottom: 18px; }
.who { display: flex; gap: 13px; height: 48px; }
.dot { display: flex; align-items: center; justify-content: center; width: 48px; height: 48px; border-radius: 50%; }
.blue { background: #81d0e3; } .green { background: #c9d879; } .coral { background: #f0907a; }
.who h3 { font-size: 18px; line-height: 20px; font-weight: 400; }
.who p { margin-top: 6px; font-size: 14px; line-height: 18px; color: #555967; }
.file { display: flex; align-items: center; height: 72px; margin-top: 13px; padding: 0 24px 0 21px; border: 1px solid #d4d5da; border-radius: 3px; box-shadow: 0 2px 4px #00000026; }
.file div { flex: 1; margin: 0 0 0 9px; }
.file strong, .file small, .person strong, .person small { display: block; font-weight: 400; }
.file strong { line-height: 20px; color: #30343f; }
.file small { font-size: 14px; line-height: 18px; color: #555967; }
.second { margin-top: 41px; }
.comment { margin-top: 10px; }
.third { margin-top: 41px; }
.changes { margin-top: 6px; border-collapse: collapse; }
.changes th, .changes td { height: 32px; padding: 0; font-weight: 400; text-align: left; }
.changes th { width: 117px; color: #555967; }
.layout-bar { flex: none; display: flex; justify-content: flex-end; height: 36px; border-top: 1px solid #cfd0d6; background: #fff; }
.layout-bar .icon-btn { width: 36px; }
.layout-bar .on { background: #ecebf6; }

.info { flex: none; display: flex; width: 411px; background: #ecedf7; }
.info-body { flex: 1; padding: 23px 26px 0 24px; }
.info-body h2 { font-size: 26px; }
.updated { margin-top: 3px; font-size: 14px; line-height: 19px; }
.info-body h3 { margin-top: 18px; font-size: 22px; line-height: 26px; color: #2a2d3a; }
.card { margin-top: 17px; padding: 16px 18px 17px; border: 1px solid #d5d6e2; border-radius: 4px; background: #fff; }
.card h4 { padding-bottom: 2px; font-size: 18px; line-height: 24px; font-weight: 400; color: #3f4250; }
.person { display: flex; align-items: center; gap: 9px; }
.person strong { line-height: 22px; }
.person small { margin-top: 2px; font-size: 14px; line-height: 20px; color: #4a4d5a; }
.face { flex: none; display: flex; align-items: center; justify-content: center; width: 48px; height: 48px; border: 1px solid #d2d3d8; border-radius: 50%; background: #f5f5f7; font-size: 24px; color: #4a4d5a; }
.pair { display: grid; grid-template-columns: 161px 1fr; padding-top: 7px; }
.pair dd { margin-top: 2px; line-height: 27px; }
.assigned .person { margin: 9px 0 25px; }
.assigned p { font-size: 15px; line-height: 18px; color: #4a4d5a; }
.btn.plain { width: 100%; border-color: #3f4250; color: #3f4250; }
.side { flex: none; display: flex; flex-direction: column; align-items: center; width: 55px; padding-top: 9px; background: #cfceea; }
.side .icon-btn { width: 36px; height: 45px; }
.side-on { display: flex; align-self: stretch; justify-content: center; margin-bottom: 5px; padding-right: 3px; border-left: 3px solid #2d7458; }
.side .side-on .icon-btn { height: 36px; border-radius: 50%; background: #fff; }

/* taskbar */
.taskbar { flex: none; display: flex; justify-content: space-between; align-items: center; height: 60px; padding: 0 25px; color: #fff; font-family: "Open Sans", sans-serif; background: linear-gradient(90deg, #1e232b 0, #1c2230 15%, #14234e 22%, #12225a 32%, #151c5e 35%, #14254c 38%, #131f58 47%, #1d1f3a 52%, #1d1f3a 59%, #122250 62%, #122250 69%, #1f212e 73%, #1e242c 78%, #1e222b 100%); }
.apps, .tray { display: flex; align-items: center; }
.app-ic { position: relative; display: flex; align-items: center; justify-content: center; width: 50px; height: 50px; margin-right: 5px; padding: 0 0 1px; border: 0; border-radius: 5px; background: none; }
.app-ic:first-child { width: 30px; margin-right: 18px; }
.search { display: flex; align-items: center; gap: 7px; width: 125px; height: 40px; margin-right: 7px; padding: 0 28px; border: 1px solid #343743; border-radius: 20px; background: #2b2e39; font-size: 15px; }
.run::after { content: ""; position: absolute; left: 50%; bottom: 0; width: 8px; height: 4px; margin-left: -4px; border-radius: 2px; background: #8d94a6; }
.active { background: #22305e; }
.active::after { width: 20px; margin-left: -10px; background: #4cc2ff; }
.mic { display: flex; align-items: center; justify-content: center; width: 40px; height: 50px; margin: 0 10px 0 12px; padding: 0; border: 0; border-radius: 5px; background: #4cc2ff; }
.status { display: flex; gap: 10px; margin-right: 20px; }
.clock { margin-right: 11px; padding-bottom: 2px; font-size: 15px; line-height: 20px; text-align: right; }
```
